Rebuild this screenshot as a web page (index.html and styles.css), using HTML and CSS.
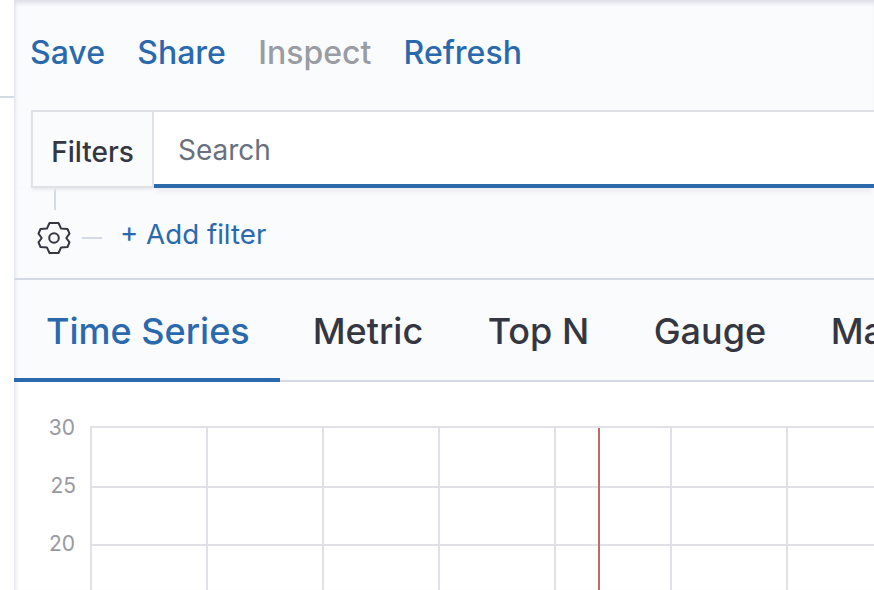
FILE: index.html
```html
<!doctype html>
<html lang="en">
<head>
<title>Visualize</title>
<link rel="stylesheet" href="styles.css">
</head>
<body>
<div class="page">
  <div class="side"><div class="side-line"></div></div>
  <div class="main">
    <nav class="topnav">
      <a class="navlink">Save</a>
      <a class="navlink">Share</a>
      <a class="navlink disabled">Inspect</a>
      <a class="navlink">Refresh</a>
    </nav>
    <div class="searchbar">
      <div class="filters-label">Filters</div>
      <div class="search-input">Search</div>
    </div>
    <div class="filterbar">
      <div class="connector"></div>
      <div class="filter-row">
        <svg class="gear" width="34" height="34" viewBox="0 0 34 34" fill="none" stroke="#343741" stroke-width="2" stroke-linejoin="round">
          <path d="M12.500 2h9l2.600 5.600 6.400.4 2 4.600-3.200 4.400 3.200 4.400-2 4.600-6.400.4-2.600 5.600h-9l-2.600-5.600-6.400-.4-2-4.600 3.200-4.400-3.200-4.400 2-4.600 6.400-.4z"/>
          <circle cx="17" cy="17" r="4.800"/>
        </svg>
        <span class="dash"></span>
        <a class="add-filter">+ Add filter</a>
      </div>
    </div>
    <div class="tabs">
      <a class="tab active">Time Series</a>
      <a class="tab">Metric</a>
      <a class="tab">Top N</a>
      <a class="tab">Gauge</a>
      <a class="tab">Markdown</a>
    </div>
    <div class="chart">
      <svg class="chart-svg" width="860" height="208" viewBox="14 382 860 208">
        <g class="grid">
          <line x1="91" y1="426" x2="91" y2="590"/>
          <line x1="207" y1="426" x2="207" y2="590"/>
          <line x1="323" y1="426" x2="323" y2="590"/>
          <line x1="439" y1="426" x2="439" y2="590"/>
          <line x1="555" y1="426" x2="555" y2="590"/>
          <line x1="671" y1="426" x2="671" y2="590"/>
          <line x1="787" y1="426" x2="787" y2="590"/>
          <line x1="90" y1="427" x2="874" y2="427"/>
          <line x1="90" y1="487" x2="874" y2="487"/>
          <line x1="90" y1="545" x2="874" y2="545"/>
        </g>
        <line class="marker" x1="599" y1="428" x2="599" y2="590"/>
        <g class="ticks">
          <text x="75" y="435">30</text>
          <text x="76" y="493">25</text>
          <text x="75" y="551">20</text>
        </g>
      </svg>
    </div>
  </div>
</div>
</body>
</html>
```

FILE: styles.css
```css
html, body {
  margin: 0;
  height: 100%;
  overflow: hidden;
  background: #fff;
}
body {
  font-family: Inter, "Liberation Sans", sans-serif;
  color: #343741;
}
.page {
  display: flex;
  height: 590px;
}
.side {
  width: 14px;
  flex: none;
  padding-top: 96px;
  box-sizing: border-box;
}
.side-line {
  height: 2px;
  background: #d3dae6;
}
.main {
  flex: 1;
  min-width: 0;
  background: #fff;
  box-shadow: inset 5px 0 4px -3px #e4e6ee;
}
.topnav {
  display: flex;
  align-items: center;
  gap: 32.3px;
  height: 110px;
  box-sizing: border-box;
  padding: 0 0 6px 16px;
  background: #fafbfd;
  box-shadow: inset 0 6px 5px -3px #dcdde6, inset 4px 0 3px -2px #e4e6ee;
}
.navlink {
  font-size: 32px;
  font-weight: 500;
  color: #2b69ad;
}
.navlink.disabled { color: #9a9ca3; }
.searchbar {
  display: flex;
  height: 78px;
  background: #fafbfd;
  padding-left: 17px;
  box-sizing: border-box;
  box-shadow: inset 4px 0 3px -2px #e4e6ee;
}
.filters-label {
  width: 123px;
  flex: none;
  box-sizing: border-box;
  display: flex;
  align-items: center;
  justify-content: center;
  font-size: 28px;
  font-weight: 500;
  color: #343741;
  border: 2px solid #dfe1e6;
  background: #fafbfd;
  padding-top: 6px;
  box-shadow: 0 3px 3px -1px #e9eaee;
}
.search-input {
  flex: 1;
  display: flex;
  align-items: center;
  padding: 4px 0 0 24px;
  background: #fff;
  border-top: 2px solid #dfe1e6;
  border-bottom: 4px solid #2b69ad;
  font-size: 28px;
  color: #69707d;
  box-shadow: 0 6px 5px -2px #ebecf0;
}
.filterbar {
  height: 92px;
  box-sizing: border-box;
  padding-left: 23px;
  background: #fafbfd;
  border-bottom: 2px solid #d3dae6;
  box-shadow: inset 4px 0 3px -2px #e4e6ee;
}
.connector {
  width: 2px;
  height: 22px;
  margin-left: 17px;
  background: #d3dae6;
}
.filter-row {
  display: flex;
  align-items: center;
  height: 34px;
  margin-top: 11px;
}
.gear { flex: none; }
.dash {
  width: 20px;
  height: 2px;
  margin: 0 18px 0 11px;
  background: #d3dae6;
}
.add-filter {
  font-size: 27.7px;
  color: #2b69ad;
  margin-top: -9px;
}
.tabs {
  display: flex;
  height: 102px;
  background: #fafbfd;
  box-shadow: inset 0 -2px 0 #d3dae6, inset 4px 0 3px -2px #e4e6ee;
  white-space: nowrap;
  overflow: hidden;
}
.tab {
  flex: none;
  box-sizing: border-box;
  height: 102px;
  padding: 29px 31.5px 0 33px;
  font-size: 36px;
  font-weight: 500;
  color: #343741;
}
.tab.active {
  padding: 29px 30px 0 32px;
  color: #2b69ad;
  border-bottom: 4px solid #2b69ad;
}
.chart { height: 208px; }
.chart-svg { display: block; }
.grid line {
  stroke: #e0e0e6;
  stroke-width: 2;
}
.marker {
  stroke: #bc6a6a;
  stroke-width: 2;
}
.ticks text {
  font-family: Inter, "Liberation Sans", sans-serif;
  font-size: 21px;
  fill: #98999e;
  text-anchor: end;
}
```
